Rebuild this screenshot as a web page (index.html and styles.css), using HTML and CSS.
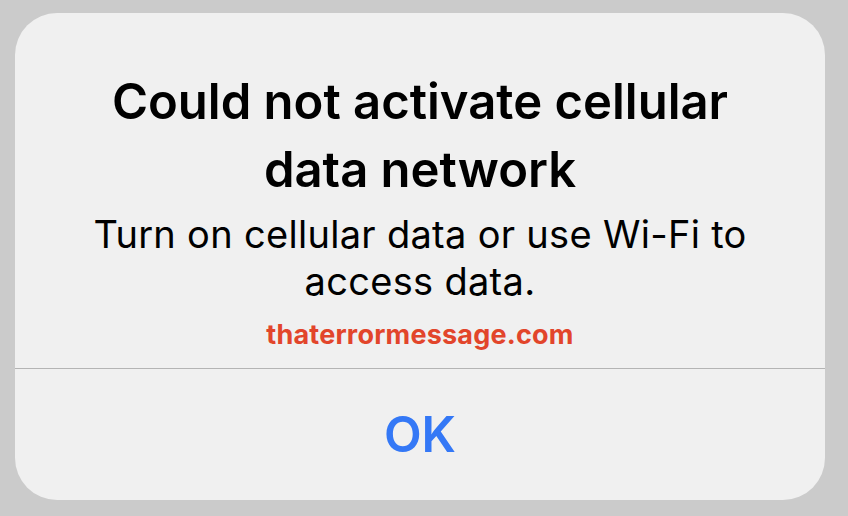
FILE: index.html
```html
<!DOCTYPE html>
<html lang="en">
<head>
    <meta charset="UTF-8">
    <title>Cellular data alert</title>
    <link rel="stylesheet" href="styles.css">
</head>
<body>
    <div class="alert">
        <div class="alert-body">
            <h1 class="title">Could not activate cellular<br>data network</h1>
            <p class="message">Turn on cellular data or use Wi-Fi to<br>access data.</p>
            <div class="watermark">thaterrormessage.com</div>
        </div>
        <button class="ok">OK</button>
    </div>
</body>
</html>
```

FILE: styles.css
```css
body {
    margin: 0;
    height: 516px;
    padding: 13px 0 0 15px;
    box-sizing: border-box;
    background: #cbcbcb;
    font-family: Inter, "Noto Sans", sans-serif;
}
.alert {
    width: 810px;
    height: 487px;
    background: #f0f0f0;
    border-radius: 42px;
    display: flex;
    flex-direction: column;
    overflow: hidden;
}
.alert-body {
    flex: 1;
    display: flex;
    flex-direction: column;
    align-items: center;
    text-align: center;
    padding-top: 55px;
}
.title {
    margin: 0;
    font-size: 49px;
    font-weight: 600;
    line-height: 68px;
    color: #000;
}
.message {
    margin: 7px 0 0;
    font-size: 38px;
    font-weight: 400;
    line-height: 47px;
    letter-spacing: 0.3px;
    color: #000;
}
.watermark {
    margin-top: 14px;
    font-size: 27px;
    font-weight: 700;
    line-height: 32px;
    letter-spacing: 0.2px;
    color: #e2452b;
}
.ok {
    height: 132px;
    flex-shrink: 0;
    border: none;
    border-top: 1px solid #b4b4b4;
    background: none;
    font-family: inherit;
    font-size: 49px;
    font-weight: 600;
    color: #3478f6;
    cursor: pointer;
}
```
